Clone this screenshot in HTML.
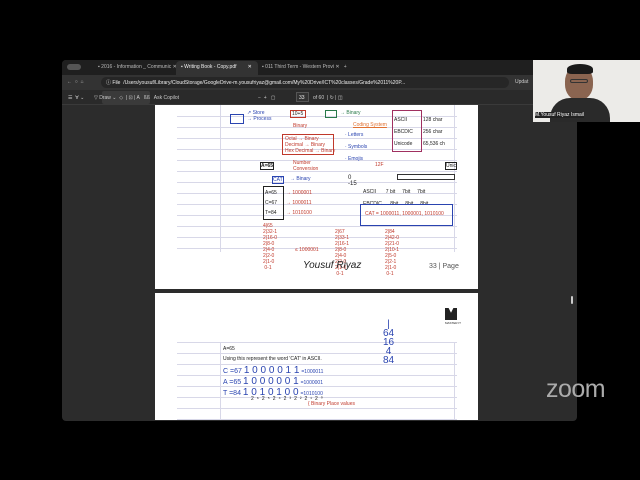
<!DOCTYPE html>
<html><head><style>
*{margin:0;padding:0;box-sizing:border-box}
body{width:640px;height:480px;background:#000;position:relative;overflow:hidden;font-family:"Liberation Sans",sans-serif}
.a{position:absolute}
.t{font-size:5px;color:#ddd;white-space:nowrap}
.hw{position:absolute;font-size:5px;white-space:nowrap;font-family:"Liberation Sans",sans-serif}
.b{color:#2a44b0}.r{color:#c0392b}.k{color:#222}.g{color:#2a7a4a}.o{color:#e07030}
.line{position:absolute;height:1px;background:#d8d8e8}
</style></head><body>
<div class="a" style="left:62px;top:60px;width:515px;height:361px;background:#2c2c2c;border-radius:4px"></div>
<div class="a" style="left:62px;top:60px;width:515px;height:15px;background:#1f1f1f;border-radius:4px 4px 0 0"></div>
<div class="a" style="left:67px;top:64px;width:14px;height:6px;background:#555;border-radius:3px"></div>
<div class="a t" style="left:98px;top:64px;color:#bbb">▪ 2016 - Information _ Communic ✕</div>
<div class="a" style="left:176px;top:61px;width:82px;height:14px;background:#333;border-radius:4px 4px 0 0"></div>
<div class="a t" style="left:181px;top:64px;color:#eee">▪ Writing Book - Copy.pdf &nbsp; &nbsp; &nbsp; &nbsp;✕</div>
<div class="a t" style="left:262px;top:64px;color:#bbb">▪ 011 Third Term - Western Provi ✕ &nbsp; +</div>
<div class="a" style="left:62px;top:75px;width:515px;height:15px;background:#333"></div>
<div class="a t" style="left:67px;top:79px;color:#bbb">←&nbsp; ○&nbsp; ⌂</div>
<div class="a" style="left:101px;top:77px;width:408px;height:11px;background:#262626;border-radius:6px"></div>
<div class="a t" style="left:106px;top:79px;color:#eee">ⓘ File &nbsp;/Users/yousuf/Library/CloudStorage/GoogleDrive-m.yousufriyaz@gmail.com/My%20Drive/ICT%20classes/Grade%2011%20P...</div>
<div class="a t" style="left:515px;top:79px;color:#ccc">Updat</div>
<div class="a" style="left:62px;top:90px;width:515px;height:15px;background:#2a2a2a;border-bottom:1px solid #3a3a3a"></div>
<div class="a" style="left:102px;top:91px;width:48px;height:13px;background:#3a3a3a;border-radius:2px"></div>
<div class="a t" style="left:68px;top:95px;color:#ccc">☰ &nbsp;∀ ⌄ &nbsp; &nbsp; &nbsp; ▽ Draw ⌄ &nbsp;◇ &nbsp;| ⊡ | A &nbsp; ßß &nbsp; Ask Copilot</div>
<div class="a t" style="left:258px;top:95px;color:#ccc">− &nbsp;+ &nbsp; ▢</div>
<div class="a" style="left:296px;top:92px;width:13px;height:10px;border:1px solid #555;background:#333"></div>
<div class="a t" style="left:299px;top:95px;color:#eee">33</div>
<div class="a t" style="left:313px;top:95px;color:#ccc">of 60 &nbsp;| ↻ | ◫</div>
<div class="a" style="left:155px;top:105px;width:323px;height:184px;background:#fff">
  <div class="a" style="left:22px;top:0;width:280px;height:147px">
    <div class="line" style="top:11px;width:280px"></div><div class="line" style="top:22px;width:280px"></div><div class="line" style="top:33px;width:280px"></div><div class="line" style="top:44px;width:280px"></div><div class="line" style="top:55px;width:280px"></div><div class="line" style="top:66px;width:280px"></div><div class="line" style="top:77px;width:280px"></div><div class="line" style="top:88px;width:280px"></div><div class="line" style="top:99px;width:280px"></div><div class="line" style="top:110px;width:280px"></div><div class="line" style="top:121px;width:280px"></div><div class="line" style="top:132px;width:280px"></div><div class="line" style="top:143px;width:280px"></div>
    <div class="a" style="left:43px;top:0;width:1px;height:147px;background:#d8d8e8"></div>
    <div class="a" style="left:277px;top:0;width:1px;height:147px;background:#d8d8e8"></div>
  </div>
  <div class="a" style="left:75px;top:9px;width:14px;height:10px;border:1px solid #2a44b0"></div>
  <div class="hw b" style="left:92px;top:5px">↗ Store<br>→ Process</div>
  <div class="a" style="left:135px;top:5px;width:16px;height:8px;border:1px solid #c0392b"></div><div class="hw k" style="left:137px;top:6px">10+5</div>
  <div class="hw r" style="left:138px;top:18px">Binary</div>
  <div class="a" style="left:127px;top:29px;width:52px;height:21px;border:1px solid #c0392b"></div>
  <div class="hw r" style="left:130px;top:31px">Octal → Binary<br>Decimal → Binary<br>Hex Decimal → Binary</div>
  <div class="hw r" style="left:138px;top:55px">Number<br>Conversion</div>
  <div class="a" style="left:170px;top:5px;width:12px;height:8px;border:1px solid #2a7a4a"></div><div class="hw g" style="left:185px;top:5px">→ Binary</div>
  <div class="hw o" style="left:198px;top:17px;text-decoration:underline">Coding System</div>
  <div class="hw b" style="left:190px;top:27px">· Letters<br><br>· Symbols<br><br>· Emojis</div>
  <div class="a" style="left:237px;top:5px;width:30px;height:42px;border:1px solid #a03060"></div>
  <div class="hw k" style="left:239px;top:12px">ASCII<br><br>EBCDIC<br><br>Unicode</div>
  <div class="hw k" style="left:268px;top:12px">128 char<br><br>256 char<br><br>65,536 ch</div>
  <div class="hw k" style="left:105px;top:57px;border:1px solid #222;font-weight:bold">A=65</div>
  <div class="hw k" style="left:290px;top:57px;border:1px solid #222">Unic</div>
  <div class="a" style="left:193px;top:70px;width:10px;height:12px;font-size:6px;color:#222">0<br>-15</div>
  <div class="hw r" style="left:220px;top:57px">12F</div>
  <div class="a" style="left:242px;top:69px;width:58px;height:6px;border:1px solid #333"></div>
  <div class="hw b" style="left:117px;top:71px;border:1px solid #2a44b0">CAT</div><div class="hw b" style="left:135px;top:71px">→ Binary</div>
  <div class="a" style="left:108px;top:81px;width:21px;height:34px;border:1px solid #222"></div>
  <div class="hw k" style="left:110px;top:83px;line-height:10px">A=65<br>C=67<br>T=84</div>
  <div class="hw r" style="left:131px;top:83px;line-height:10px">→ 1000001<br>→ 1000011<br>→ 1010100</div>
  <div class="hw k" style="left:208px;top:81px;line-height:12px">ASCII &nbsp; &nbsp; &nbsp; 7 bit &nbsp; &nbsp; 7bit &nbsp; &nbsp; 7bit<br>EBCDIC &nbsp; &nbsp; &nbsp;8bit &nbsp; &nbsp; 8bit &nbsp; &nbsp; 8bit</div>
  <div class="a" style="left:205px;top:99px;width:93px;height:22px;border:1px solid #2a44b0"></div>
  <div class="hw r" style="left:210px;top:106px">CAT = 1000011, 1000001, 1010100</div>
  <div class="hw r" style="left:108px;top:118px;line-height:6px">4|65<br>2|32-1<br>2|16-0<br>2|8-0<br>2|4-0<br>2|2-0<br>2|1-0<br>&nbsp;0-1</div>
  <div class="hw r" style="left:140px;top:142px">≤ 1000001</div>
  <div class="hw r" style="left:180px;top:124px;line-height:6px">2|67<br>2|33-1<br>2|16-1<br>2|8-0<br>2|4-0<br>2|2-0<br>2|1-0<br>&nbsp;0-1</div>
  <div class="hw r" style="left:230px;top:124px;line-height:6px">2|84<br>2|42-0<br>2|21-0<br>2|10-1<br>2|5-0<br>2|2-1<br>2|1-0<br>&nbsp;0-1</div>
  <div class="hw k" style="left:148px;top:155px;font-size:10px;font-style:italic">Yousuf Riyaz</div>
  <div class="hw" style="left:274px;top:158px;font-size:7px;color:#555">33 | Page</div>
</div>
<div class="a" style="left:155px;top:293px;width:323px;height:127px;background:#fff">
  <div class="a" style="left:22px;top:49px;width:280px;height:78px">
    <div class="line" style="top:0;width:280px"></div><div class="line" style="top:11px;width:280px"></div><div class="line" style="top:22px;width:280px"></div><div class="line" style="top:33px;width:280px"></div><div class="line" style="top:44px;width:280px"></div><div class="line" style="top:55px;width:280px"></div><div class="line" style="top:66px;width:280px"></div><div class="line" style="top:77px;width:280px"></div>
    <div class="a" style="left:43px;top:0;width:1px;height:78px;background:#d8d8e8"></div>
    <div class="a" style="left:277px;top:0;width:1px;height:78px;background:#d8d8e8"></div>
  </div>
  <div class="a" style="left:290px;top:15px;width:12px;height:12px;background:#222;clip-path:polygon(0 0,30% 0,50% 40%,70% 0,100% 0,100% 100%,0 100%)"></div>
  <div class="hw k" style="left:290px;top:28px;font-size:3px">MASTER IT</div>
  <div class="hw k" style="left:68px;top:53px">A=65</div>
  <div class="hw k" style="left:68px;top:63px">Using this represent the word 'CAT' in ASCII.</div>
  <div class="hw b" style="left:68px;top:73px;line-height:10px;font-size:7px">C =67 <span style="font-size:10px">1 0 0 0 0 1 1</span> <span style="font-size:5px">=1000011</span><br>A =65 <span style="font-size:10px">1 0 0 0 0 0 1</span> <span style="font-size:5px">=1000001</span><br>T =84 <span style="font-size:10px">1 0 1 0 1 0 0</span> <span style="font-size:5px">=1010100</span></div>
  <div class="hw k" style="left:96px;top:103px;letter-spacing:3px">2⁶2⁵2⁴2³2²2¹2⁰</div>
  <div class="hw r" style="left:153px;top:108px">{ Binary Place values</div>
  <div class="hw b" style="left:228px;top:27px;font-size:10px;line-height:9px;text-align:center">|<br>64<br>16<br>4<br>84</div>
</div>
<div class="a" style="left:571px;top:296px;width:2px;height:8px;background:#ccc;border-radius:1px"></div>
<div class="a" style="left:533px;top:60px;width:107px;height:62px;background:#ecebe8"></div>
<div class="a" style="left:565px;top:66px;width:28px;height:34px;background:#8a6450;border-radius:45%"></div>
<div class="a" style="left:567px;top:64px;width:26px;height:10px;background:#1a1a1a;border-radius:50% 50% 20% 20%"></div>
<div class="a" style="left:570px;top:79px;width:18px;height:4px;border:1px solid #333;border-radius:2px"></div>
<div class="a" style="left:550px;top:98px;width:60px;height:24px;background:#2a2a2a;border-radius:20px 20px 0 0"></div>
<div class="a t" style="left:535px;top:112px;color:#fff;background:#222;font-size:5px">M.Yousuf Riyaz Ismail</div>
<div class="a" style="left:546px;top:375px;font-size:25px;color:#ababab;font-family:'Liberation Sans',sans-serif;letter-spacing:-0.5px">zoom</div>
</body></html>
